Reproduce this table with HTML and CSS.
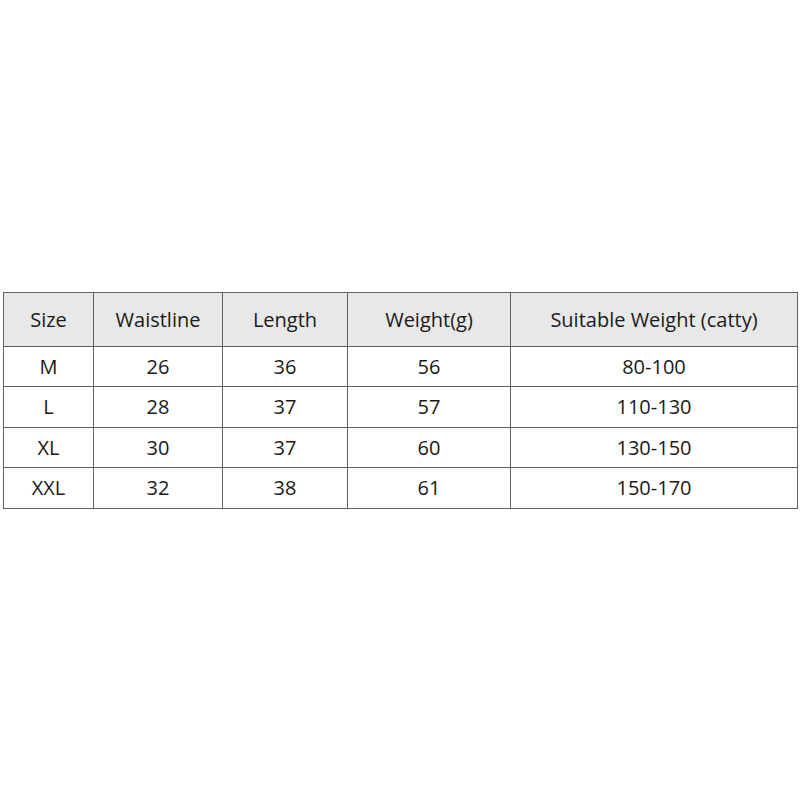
FILE: index.html
```html
<!DOCTYPE html>
<html>
<head>
<meta charset="utf-8">
<link rel="stylesheet" href="styles.css">
</head>
<body>
<div class="page">
  <table class="size-table">
    <colgroup>
      <col class="c1"><col class="c2"><col class="c3"><col class="c4"><col class="c5">
    </colgroup>
    <thead>
      <tr><th>Size</th><th>Waistline</th><th>Length</th><th>Weight(g)</th><th>Suitable Weight (catty)</th></tr>
    </thead>
    <tbody>
      <tr><td>M</td><td>26</td><td>36</td><td>56</td><td>80-100</td></tr>
      <tr class="tall"><td>L</td><td>28</td><td>37</td><td>57</td><td>110-130</td></tr>
      <tr><td>XL</td><td>30</td><td>37</td><td>60</td><td>130-150</td></tr>
      <tr class="tall"><td>XXL</td><td>32</td><td>38</td><td>61</td><td>150-170</td></tr>
    </tbody>
  </table>
</div>
</body>
</html>
```
FILE: styles.css
```css
html, body {
  margin: 0;
  padding: 0;
  background: #ffffff;
}
.page {
  width: 800px;
  height: 800px;
  padding: 292px 0 0 3px;
  box-sizing: border-box;
}
.size-table {
  border-collapse: collapse;
  table-layout: fixed;
  width: 795px;
  font-family: "Open Sans", "Noto Sans", sans-serif;
  font-size: 20px;
  color: #1a1a1a;
}
.c1 { width: 90px; }
.c2 { width: 129px; }
.c3 { width: 125px; }
.c4 { width: 163px; }
.c5 { width: 287px; }
.size-table th,
.size-table td {
  border: 1px solid #606060;
  text-align: center;
  padding: 0;
  font-weight: normal;
  line-height: 1;
}
.size-table th {
  background: #e8e8e8;
  height: 53px;
}
.size-table td {
  height: 39px;
}
.size-table tr.tall td {
  height: 40px;
}
```
